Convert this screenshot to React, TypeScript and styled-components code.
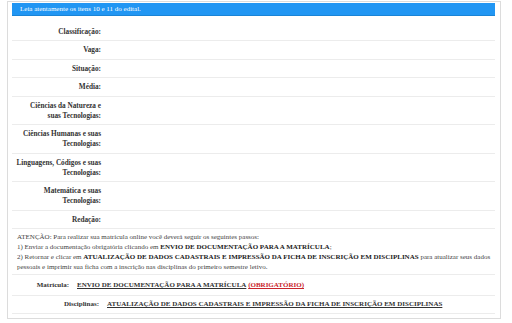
import styled, { createGlobalStyle } from 'styled-components';

type RowType = {
  label: string;
  value?: string;
};

const scoreRows: RowType[] = [
  { label: 'Classificação:' },
  { label: 'Vaga:' },
  { label: 'Situação:' },
  { label: 'Média:' },
  { label: 'Ciências da Natureza e suas Tecnologias:' },
  { label: 'Ciências Humanas e suas Tecnologias:' },
  { label: 'Linguagens, Códigos e suas Tecnologias:' },
  { label: 'Matemática e suas Tecnologias:' },
  { label: 'Redação:' },
];

function App() {
  return (
    <>
      <GlobalStyle />
      <Page>
        <Panel>
          <AlertBar>Leia atentamente os itens 10 e 11 do edital.</AlertBar>
          <Table>
            {scoreRows.map((row) => (
              <Row key={row.label} $cols="93px 1fr">
                <Label>{row.label}</Label>
                <Value>{row.value}</Value>
              </Row>
            ))}
            <Notice>
              ATENÇÃO: Para realizar sua matrícula online você deverá seguir os seguintes passos:
              <br />
              1) Enviar a documentação obrigatória clicando em <b>ENVIO DE DOCUMENTAÇÃO PARA A MATRÍCULA</b>;
              <br />
              2) Retornar e clicar em{' '}
              <b>ATUALIZAÇÃO DE DADOS CADASTRAIS E IMPRESSÃO DA FICHA DE INSCRIÇÃO EM DISCIPLINAS</b> para
              atualizar seus dados pessoais e imprimir sua ficha com a inscrição nas disciplinas do primeiro
              semestre letivo.
            </Notice>
            <Row $cols="61px 1fr" $padTop={5} $padBottom={5}>
              <Label $size={7}>Matrícula:</Label>
              <Value>
                <StepLink href="#">ENVIO DE DOCUMENTAÇÃO PARA A MATRÍCULA</StepLink>{' '}
                <StepLink href="#" $danger>
                  (OBRIGATÓRIO)
                </StepLink>
              </Value>
            </Row>
            <Row $cols="91px 1fr" $padTop={3} $padBottom={4}>
              <Label $size={7}>Disciplinas:</Label>
              <Value>
                <StepLink href="#">
                  ATUALIZAÇÃO DE DADOS CADASTRAIS E IMPRESSÃO DA FICHA DE INSCRIÇÃO EM DISCIPLINAS
                </StepLink>
              </Value>
            </Row>
          </Table>
        </Panel>
        <NextTitle>ESCOLHA DAS DISCIPLINAS DO PRIMEIRO SEMESTRE</NextTitle>
      </Page>
    </>
  );
}

export default App;

const GlobalStyle = createGlobalStyle`
  html, body {
    margin: 0;
    padding: 0;
    background: #fff;
    font-family: "Liberation Serif", "Times New Roman", serif;
    overflow: hidden;
  }
`;

const Page = styled.div`
  width: 512px;
  height: 323px;
  padding: 1px 11px 0 7px;
  box-sizing: border-box;
  overflow: hidden;
`;

const Panel = styled.div`
  border: 1px solid #dcdcdc;
  background: #fff;
  padding: 1px 5px 4px 4px;
`;

const AlertBar = styled.div`
  background: #2196f3;
  border-bottom: 1px solid #1a84d6;
  color: #fff;
  font-size: 7px;
  line-height: 9px;
  padding: 2px 8px 1px;
`;

const Table = styled.div`
  display: flex;
  flex-direction: column;
  margin-top: 6.5px;
  color: #333;
  font-size: 7px;
  line-height: 10px;
`;

const Row = styled.div<{ $cols: string; $padTop?: number; $padBottom?: number }>`
  display: grid;
  grid-template-columns: ${(p) => p.$cols};
  align-items: center;
  border-bottom: 1px solid #ececec;
  padding-top: ${(p) => (p.$padTop ?? 4) + 'px'};
  padding-bottom: ${(p) => (p.$padBottom ?? 3.5) + 'px'};
`;

const Label = styled.div<{ $size?: number }>`
  font-size: ${(p) => (p.$size ?? 7.25) + 'px'};
  font-weight: bold;
  text-align: right;
  padding: 0 4px;
`;

const Value = styled.div`
  padding: 0 4px;
`;

const Notice = styled.div`
  padding: 3px 0 2px 5px;
  border-bottom: 1px solid #ececec;
  color: #444;

  b {
    color: #222;
  }
`;

const StepLink = styled.a<{ $danger?: boolean }>`
  color: ${(p) => (p.$danger ? '#c9252c' : '#333')};
  font-weight: bold;
  text-decoration: underline;
`;

const NextTitle = styled.div`
  margin: 2px 0 0 5px;
  color: #888;
  font-size: 7px;
  font-weight: bold;
  line-height: 9px;
`;
